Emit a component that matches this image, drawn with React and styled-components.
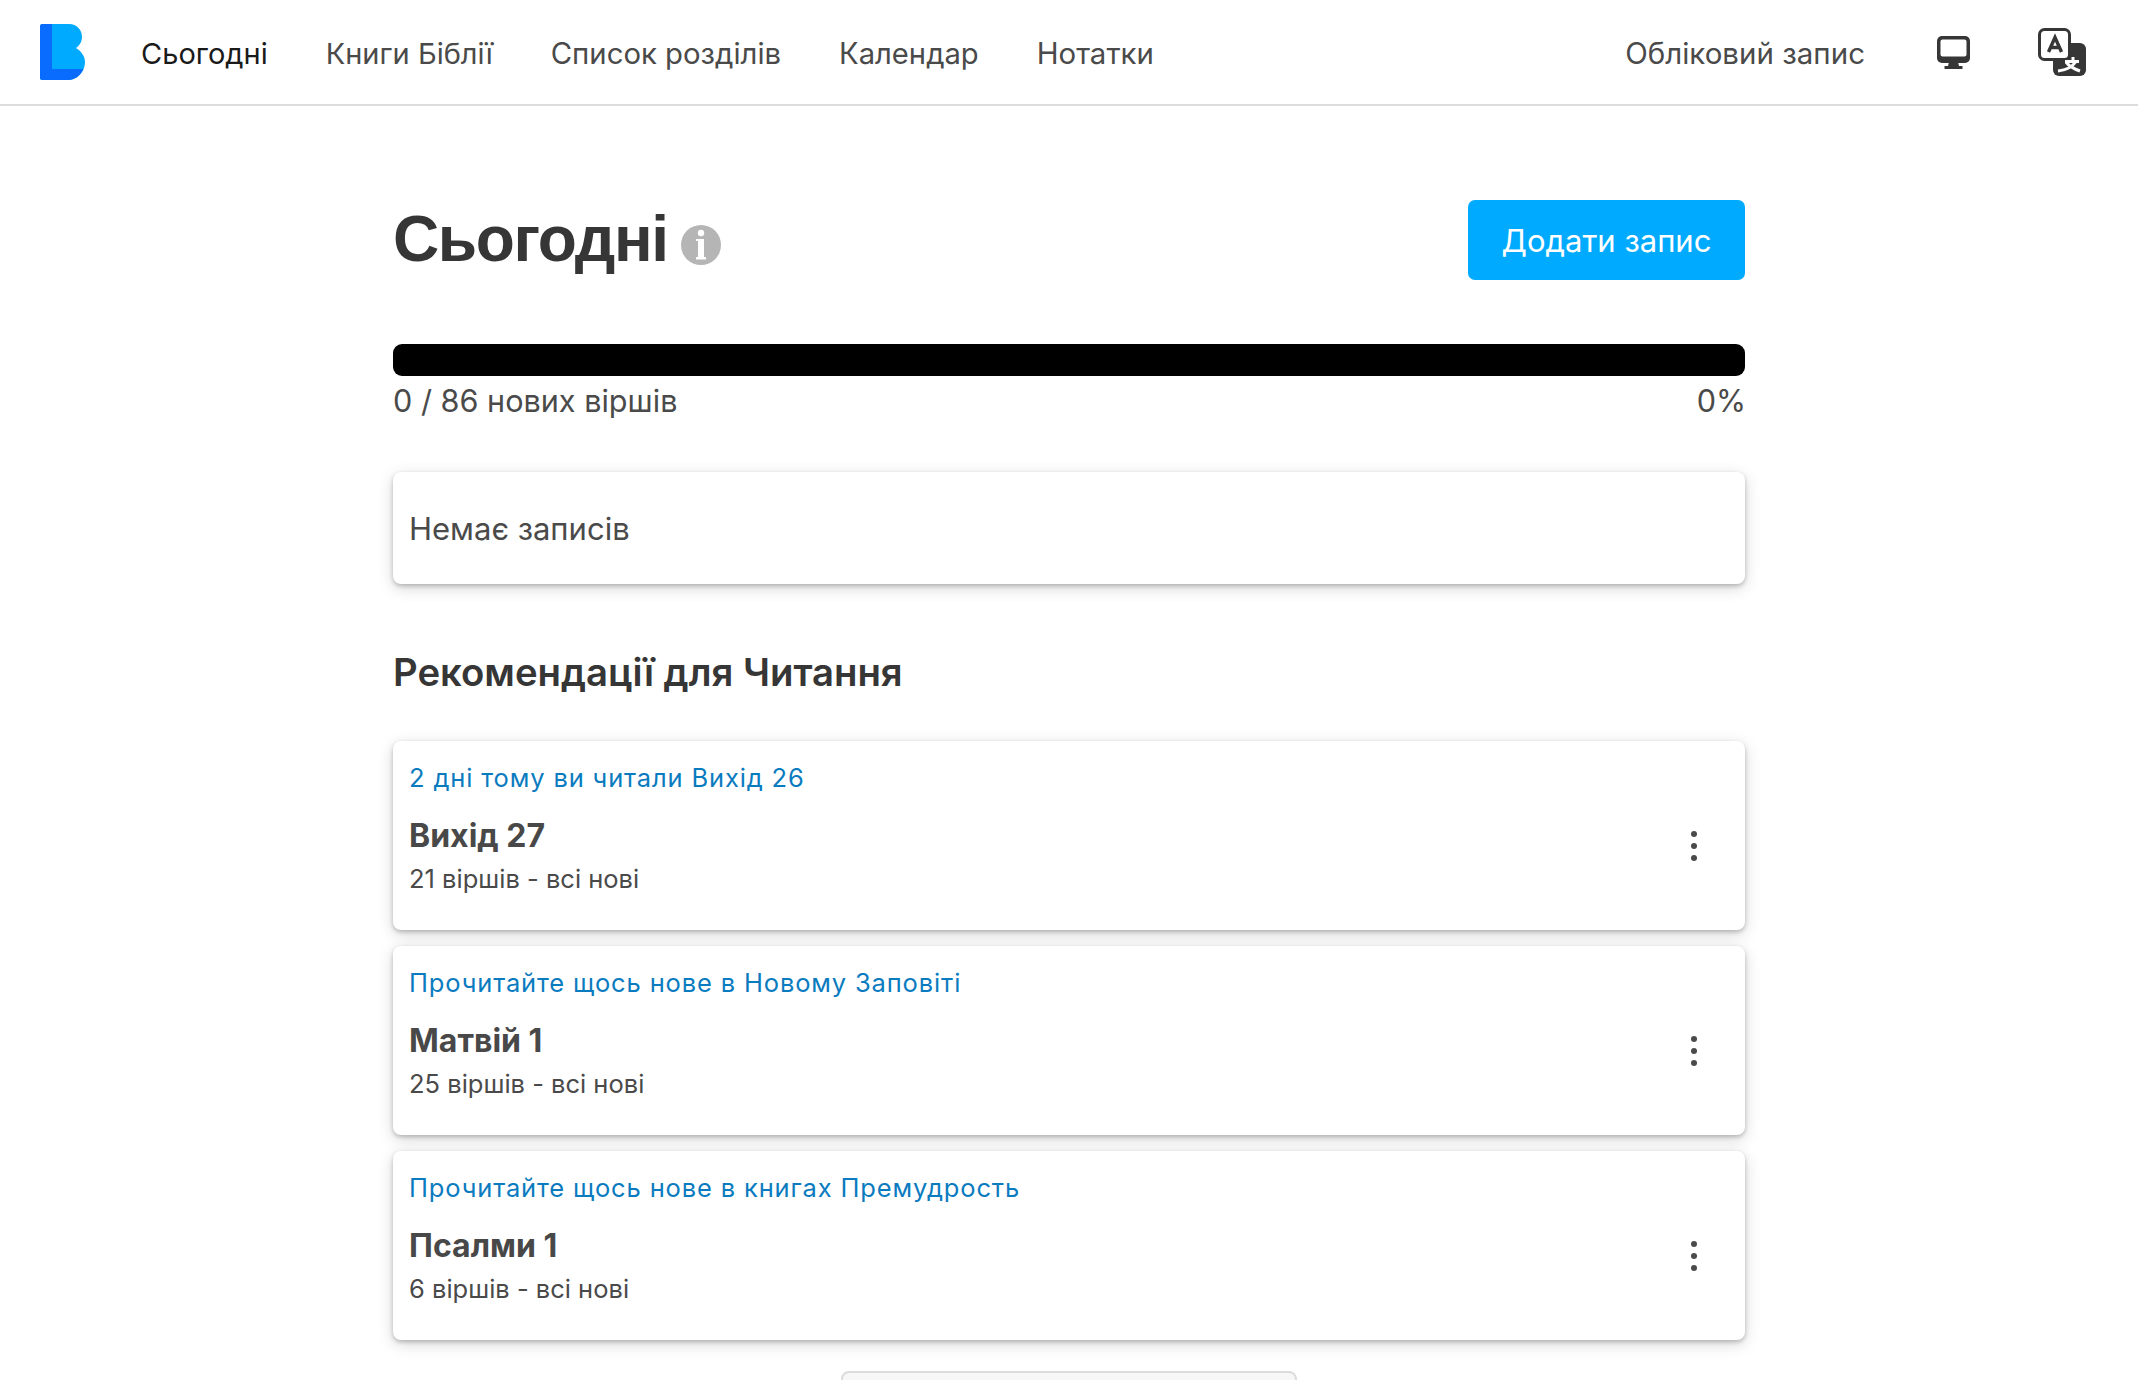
import React from "react"
import styled, { createGlobalStyle } from "styled-components"

const GlobalStyle = createGlobalStyle`
  html, body {
    margin: 0;
    padding: 0;
    height: 1380px;
    overflow: hidden;
    background: #fff;
    font-family: Inter, "Noto Sans", sans-serif;
    color: #444;
  }
`

const Nav = styled.nav`
  height: 104px;
  display: flex;
  align-items: center;
  padding: 0 52px 0 40px;
  border-bottom: 2px solid #dcdcdc;
`

const NavLink = styled.a`
  font-size: ${(props) => props.size || 29}px;
  padding-top: 2px;
  margin-left: ${(props) => props.gap || 58}px;
  color: ${(props) => (props.active ? "#1a1a1a" : "#4a4a4a")};
`

const Spacer = styled.div`
  flex: 1;
`

const IconSlot = styled.div`
  display: flex;
  margin-left: ${(props) => props.gap}px;
`

const Main = styled.main`
  width: 1352px;
  margin: 0 auto;
`

const TitleRow = styled.div`
  display: flex;
  justify-content: space-between;
  align-items: flex-start;
  padding-top: 94px;
`

const Title = styled.h1`
  margin: 0;
  font-family: "Liberation Sans", Arial, sans-serif;
  font-size: 64px;
  line-height: 78px;
  letter-spacing: -1.4px;
  font-weight: 700;
  color: #363636;
  display: flex;
  align-items: center;
  gap: 13px;

  svg {
    margin-top: 12px;
  }
`

const AddButton = styled.button`
  width: 277px;
  height: 80px;
  padding: 1px 0 0;
  border: 0;
  border-radius: 7px;
  background: #00aaff;
  color: #fff;
  font-family: inherit;
  font-size: 31px;
`

const Bar = styled.div`
  height: 32px;
  margin-top: 64px;
  background: #000;
  border-radius: 9px;
`

const BarLabels = styled.div`
  display: flex;
  justify-content: space-between;
  margin-right: -1px;
  font-size: 30.600px;
  line-height: 50px;
  color: #4a4a4a;
`

const Card = styled.div`
  display: flex;
  align-items: center;
  justify-content: space-between;
  padding: 0 16px;
  height: ${(props) => props.height}px;
  margin-bottom: 16px;
  background: #fff;
  border-radius: 8px;
  box-shadow: 0 2px 4px rgba(0, 0, 0, 0.22), 0 4px 16px rgba(0, 0, 0, 0.16);
`

const EmptyCard = styled(Card)`
  margin-top: 46px;
  box-sizing: border-box;
  font-size: 31px;
  color: #4a4a4a;
`

const SectionTitle = styled.h2`
  margin: 62px 0 43px;
  font-size: 38.300px;
  line-height: 52px;
  font-weight: 600;
  color: #363636;
`

const CardBody = styled.div`
  display: flex;
  flex-direction: column;
  align-self: flex-start;
  padding-top: 20px;
`

const Hint = styled.div`
  font-size: 25.500px;
  line-height: 34px;
  letter-spacing: 0.85px;
  color: #0a7bbf;
  margin-bottom: 20px;
`

const Name = styled.div`
  font-size: 32px;
  line-height: 42px;
  font-weight: 700;
  color: #484848;
  margin-bottom: 4px;
`

const Meta = styled.div`
  font-size: 25.500px;
  line-height: 36px;
  color: #4a4a4a;
`

const Dots = styled.div`
  display: flex;
  flex-direction: column;
  gap: 6px;
  margin-right: 32px;
  margin-top: 21px;

  span {
    width: 6px;
    height: 6px;
    border-radius: 50%;
    background: #4a4a4a;
  }
`

const MoreButton = styled.div`
  width: 456px;
  height: 40px;
  margin: 31px auto 0;
  background: #f7f7f7;
  border: 2px solid #dcdcdc;
  border-radius: 8px;
  box-sizing: border-box;
`

const Logo = () => (
  <svg width="45" height="56" viewBox="0 0 45 56">
    <path
      d="M2 0H29C37 0 42 6 42 13C42 18 39 22 36 24C41 27 45 32 45 38C45 48 37 56 28 56H2C1 56 0 55 0 54V2C0 1 1 0 2 0z"
      fill="#00aaff"
    />
    <path
      d="M2 0H12V45H43.500C40 52 35 56 28 56H2C1 56 0 55 0 54V2C0 1 1 0 2 0z"
      fill="#0a6cff"
    />
  </svg>
)

const DisplayIcon = () => (
  <svg width="33" height="33" viewBox="0 0 33 33">
    <rect width="33" height="27" rx="5" fill="#363636" />
    <rect x="3.500" y="3.500" width="26" height="17" rx="2" fill="#fff" />
    <path d="M12 26h9l1 4h3.500v3H7.500v-3H11z" fill="#363636" />
  </svg>
)

const TranslateIcon = () => (
  <svg width="48" height="48" viewBox="0 0 48 48">
    <rect x="15" y="15" width="33" height="33" rx="6" fill="#363636" />
    <rect x="1.500" y="1.500" width="30" height="30" rx="5" fill="#fff" stroke="#363636" strokeWidth="3" />
    <path d="M10.500 24L17 9.500L23.500 24M13 19.500h8" fill="none" stroke="#363636" strokeWidth="3.400" />
    <path
      d="M27 33.500H41M35 29v4.500M38 33.500C35 38 30 42 20 43M28 34C31 38 36 41 42 43"
      fill="none"
      stroke="#fff"
      strokeWidth="3"
    />
  </svg>
)

const InfoIcon = () => (
  <svg width="40" height="40" viewBox="0 0 40 40">
    <circle cx="20" cy="20" r="20" fill="#b5b5b5" />
    <circle cx="20" cy="8" r="3.200" fill="#fff" />
    <path d="M15 14h8v18h2v2.500H15V32h2V16h-2z" fill="#fff" />
  </svg>
)

const links = [
  { label: "Сьогодні", active: true, gap: 56 },
  { label: "Книги Біблії" },
  { label: "Список розділів", size: 29.3 },
  { label: "Календар", size: 29.2 },
  { label: "Нотатки", size: 29.4 },
]

const readings = [
  { hint: "2 дні тому ви читали Вихід 26", name: "Вихід 27", meta: "21 віршів - всі нові" },
  { hint: "Прочитайте щось нове в Новому Заповіті", name: "Матвій 1", meta: "25 віршів - всі нові" },
  { hint: "Прочитайте щось нове в книгах Премудрость", name: "Псалми 1", meta: "6 віршів - всі нові" },
]

const App = () => {
  return (
    <>
      <GlobalStyle />
      <Nav>
        <Logo />
        {links.map((link) => (
          <NavLink key={link.label} active={link.active} gap={link.gap} size={link.size}>
            {link.label}
          </NavLink>
        ))}
        <Spacer />
        <NavLink size={29.5}>Обліковий запис</NavLink>
        <IconSlot gap={72}>
          <DisplayIcon />
        </IconSlot>
        <IconSlot gap={68}>
          <TranslateIcon />
        </IconSlot>
      </Nav>
      <Main>
        <TitleRow>
          <Title>
            Сьогодні <InfoIcon />
          </Title>
          <AddButton>Додати запис</AddButton>
        </TitleRow>
        <Bar />
        <BarLabels>
          <span>0 / 86 нових віршів</span>
          <span>0%</span>
        </BarLabels>
        <EmptyCard height={112}>Немає записів</EmptyCard>
        <SectionTitle>Рекомендації для Читання</SectionTitle>
        {readings.map((item) => (
          <Card key={item.name} height={189}>
            <CardBody>
              <Hint>{item.hint}</Hint>
              <Name>{item.name}</Name>
              <Meta>{item.meta}</Meta>
            </CardBody>
            <Dots>
              <span />
              <span />
              <span />
            </Dots>
          </Card>
        ))}
        <MoreButton />
      </Main>
    </>
  )
}

export default App
